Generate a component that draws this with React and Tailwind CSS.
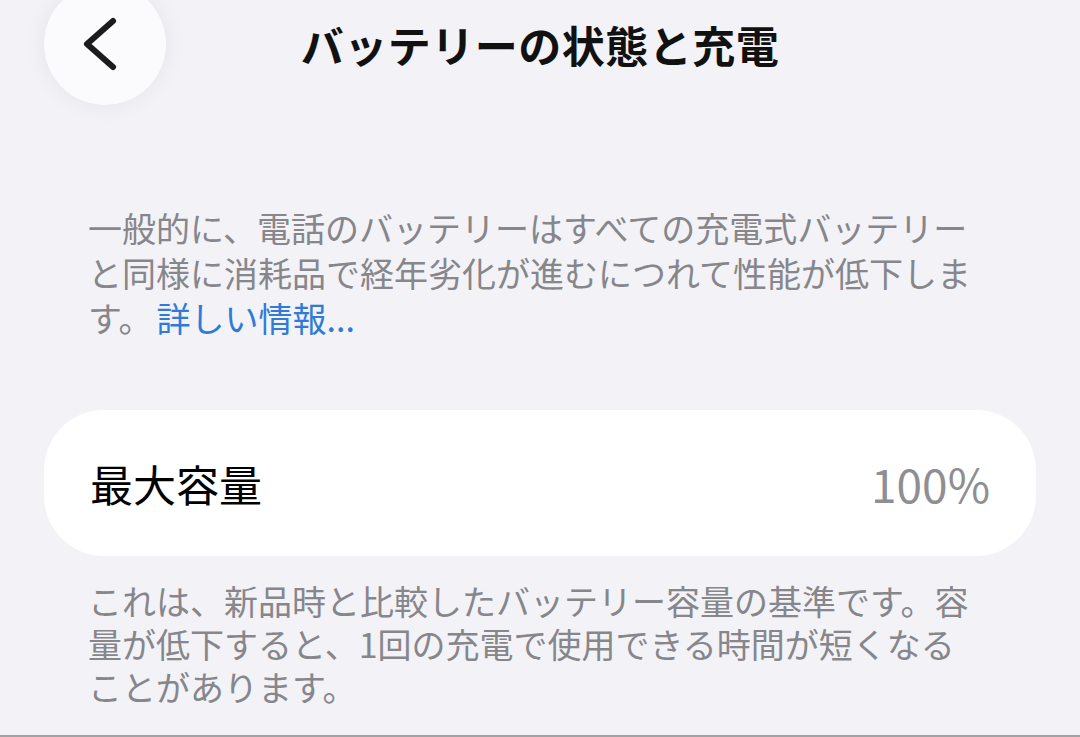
import { useState } from 'react';

const jp = { fontFamily: '"Noto Sans CJK JP", "Noto Sans", sans-serif' };

function BackButton() {
  return (
    <button className="-my-[17px] ml-[44px] w-[122px] h-[122px] shrink-0 rounded-full bg-[#fbfbfd] shadow-[0_0_24px_rgba(0,0,0,0.06)] flex items-center justify-center cursor-pointer">
      <svg width="122" height="122" viewBox="0 0 122 122" fill="none">
        <path
          d="M69 38 L43 61 L69 84"
          stroke="#1c1c1e"
          strokeWidth="6"
          strokeLinecap="round"
          strokeLinejoin="round"
        />
      </svg>
    </button>
  );
}

export default function App() {
  const [capacity] = useState(100);

  return (
    <div
      className="w-full h-[737px] bg-[#f2f2f7] overflow-hidden flex flex-col border-b-2 border-[#a3a3a6]"
      style={jp}
    >
      {/* Nav bar */}
      <div className="h-[88px] shrink-0 grid grid-cols-[1fr_auto_1fr] items-center">
        <div className="flex items-center">
          <BackButton />
        </div>
        <h1 className="text-[43px] leading-none font-bold text-[#111] tracking-[0.5px]">
          バッテリーの状態と充電
        </h1>
        <div />
      </div>

      {/* Intro */}
      <p className="mt-[117px] pl-[88px] pr-[97px] text-[34px] leading-[45px] text-[#86868b]">
        一般的に、電話のバッテリーはすべての充電式バッテリーと同様に消耗品で経年劣化が進むにつれて性能が低下します。
        <span className="ml-[4px] text-[#2f7bd6]">詳しい情報...</span>
      </p>

      {/* Maximum capacity */}
      <div className="mt-[70px] mx-[44px] h-[146px] rounded-[60px] bg-white px-[46px] flex items-center justify-between">
        <span className="text-[43px] leading-none font-normal text-[#000]">最大容量</span>
        <span className="text-[46px] leading-none text-[#8e8e93]">{capacity}%</span>
      </div>

      <p className="mt-[23px] pl-[88px] pr-[97px] text-[34px] leading-[43px] text-[#86868b]">
        これは、新品時と比較したバッテリー容量の基準です。容量が低下すると、1回の充電で使用できる時間が短くなることがあります。
      </p>
    </div>
  );
}
